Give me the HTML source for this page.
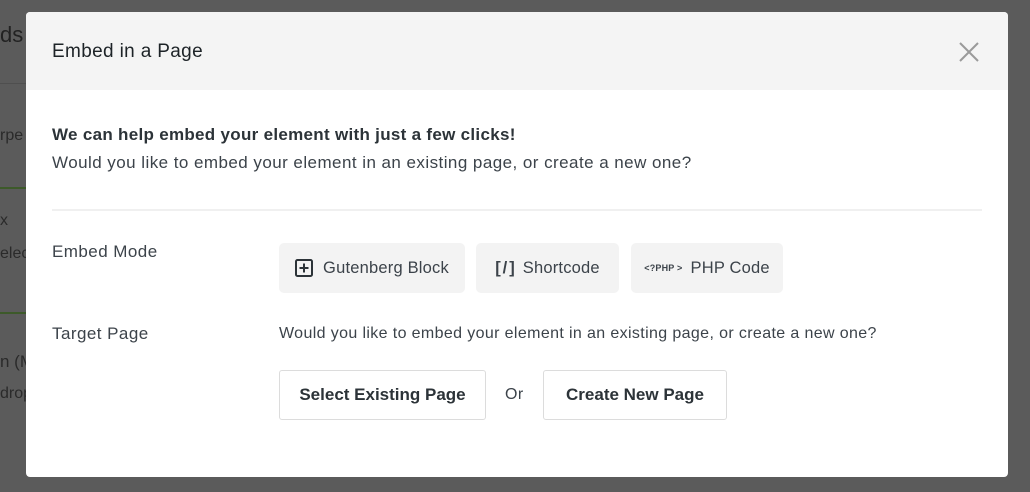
<!DOCTYPE html>
<html><head><meta charset="utf-8"><style>
body{margin:0;width:1030px;height:492px;background:#5b5b5b;font-family:"Liberation Sans",sans-serif;position:relative;overflow:hidden;color:#3c434a}
.bgline{position:absolute;background:#4f4f4f}
.modal{position:absolute;left:26px;top:12px;width:982px;height:465px;background:#fff;border-radius:4px;overflow:hidden}
.hdr{height:78px;background:#f4f4f4;position:relative}
.hdr h1{margin:0;position:absolute;left:26px;top:29px;font-size:19px;font-weight:normal;color:#1d2327;letter-spacing:.35px}
.x{position:absolute;left:932px;top:29px}
.t{position:absolute;font-size:17px;letter-spacing:.45px;white-space:nowrap}
.btn{position:absolute;background:#f3f3f3;border-radius:5px;height:50px;display:flex;align-items:center;justify-content:center;font-size:16.5px;letter-spacing:.2px;color:#3c434a;white-space:nowrap}
.ob{position:absolute;border:1px solid #dcdcdc;border-radius:3px;height:48px;display:flex;align-items:center;justify-content:center;font-size:17px;font-weight:bold;color:#2c3338;background:#fff}
</style></head><body>
<div class="bgline" style="left:0;top:83px;width:30px;height:1px"></div>
<div class="bgline" style="left:0;top:187px;width:30px;height:2px;background:#3d5a2a"></div>
<div class="bgline" style="left:0;top:312px;width:30px;height:2px;background:#3d5a2a"></div>
<div style="position:absolute;left:0;top:22px;font-size:22px;color:#222">ds</div>
<div style="position:absolute;left:0;top:127px;font-size:16px;color:#2a2a2a">rpe</div>
<div style="position:absolute;left:0;top:212px;font-size:16px;color:#2a2a2a">x</div>
<div style="position:absolute;left:0;top:245px;font-size:16px;color:#2a2a2a">elec</div>
<div style="position:absolute;left:0;top:352px;font-size:17px;color:#2a2a2a">n (M</div>
<div style="position:absolute;left:0;top:385px;font-size:16px;color:#2a2a2a">drop</div>
<div class="modal">
 <div class="hdr"><h1>Embed in a Page</h1>
  <svg class="x" width="22" height="22" viewBox="0 0 22 22"><path d="M2 2L20 20M20 2L2 20" stroke="#9a9a9a" stroke-width="2"/></svg></div>
 <div class="t" style="left:26px;top:113px;font-weight:bold;color:#2c3338;letter-spacing:.3px">We can help embed your element with just a few clicks!</div>
 <div class="t" style="left:26px;top:141px">Would you like to embed your element in an existing page, or create a new one?</div>
 <div style="position:absolute;left:26px;top:197px;width:930px;height:2px;background:#f0f0f0"></div>
 <div class="t" style="left:26px;top:230px">Embed Mode</div>
 <div class="btn" style="left:253px;top:231px;width:186px"><svg width="18" height="18" viewBox="0 0 18 18" style="margin-right:10px"><rect x="1" y="1" width="16" height="16" rx="1.5" fill="none" stroke="#2c3338" stroke-width="2"/><path d="M9 4.5v9M4.5 9h9" stroke="#2c3338" stroke-width="2"/></svg>Gutenberg Block</div>
 <div class="btn" style="left:450px;top:231px;width:143px"><b style="margin-right:6px;letter-spacing:2px">[/]</b>Shortcode</div>
 <div class="btn" style="left:605px;top:231px;width:152px"><span style="font-size:9px;font-weight:bold;margin-right:8px">&lt;?PHP &gt;</span>PHP Code</div>
 <div class="t" style="left:26px;top:312px">Target Page</div>
 <div class="t" style="left:253px;top:313px;font-size:16px;letter-spacing:.37px">Would you like to embed your element in an existing page, or create a new one?</div>
 <div class="ob" style="left:253px;top:358px;width:205px">Select Existing Page</div>
 <div class="t" style="left:479px;top:374px;font-size:16px">Or</div>
 <div class="ob" style="left:517px;top:358px;width:182px">Create New Page</div>
</div>
</body></html>
